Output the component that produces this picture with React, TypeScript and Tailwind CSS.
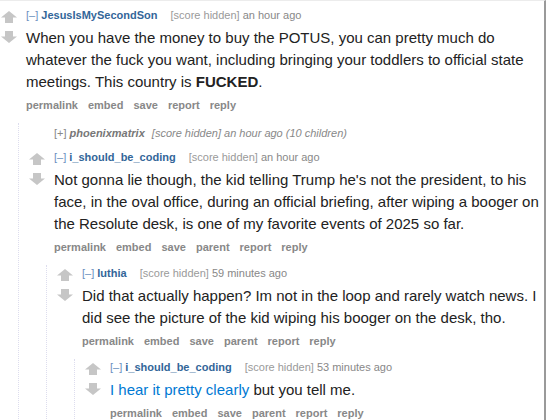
import React from "react";

type Comment = {
  author: string;
  time: string;
  body: React.ReactNode;
  buttons: string[];
  children?: React.ReactNode;
};

function Arrow({ down }: { down?: boolean }) {
  return (
    <svg width="16" height="12" viewBox="0 0 16 12" className={down ? "rotate-180" : ""}>
      <path d="M8 0 L16 6.5 L12 6.5 L12 12 L4 12 L4 6.5 L0 6.5 Z" fill="#c6c6c6" />
    </svg>
  );
}

function Tagline({ author, time }: { author: string; time: string }) {
  return (
    <div className="h-[16px] text-[11px] leading-[16px] whitespace-nowrap">
      <span className="text-[#6a8fc0]">[–]</span>{" "}
      <span className="font-bold text-[#336699] mr-[10px]">{author}</span>{" "}
      <span className="text-[#9a9a9a]">[score hidden]</span>{" "}
      <span className="text-[#888]">{time}</span>
    </div>
  );
}

function Buttons({ items }: { items: string[] }) {
  return (
    <ul className="flex gap-[10px] mt-[4px] h-[16px] text-[11px] leading-[16px] font-bold text-[#888]">
      {items.map((b) => (
        <li key={b}>{b}</li>
      ))}
    </ul>
  );
}

function CommentItem({ author, time, body, buttons, children }: Comment) {
  return (
    <div>
      <div className="flex">
        <div className="w-[25px] shrink-0 flex flex-col gap-[8px] mt-[4px]">
          <Arrow />
          <Arrow down />
        </div>
        <div className="flex-1 pr-[2px]">
          <Tagline author={author} time={time} />
          <div className="mt-[4px] text-[15px] leading-[22px] text-[#222]">{body}</div>
          <Buttons items={buttons} />
        </div>
      </div>
      {children && (
        <div className="ml-[17px] mt-[10px] border-l border-dotted border-[#dde] pl-[10px]">{children}</div>
      )}
    </div>
  );
}

function Collapsed() {
  return (
    <div className="pl-[25px] pt-[2px] mb-[8px] h-[18px] text-[11px] leading-[16px] text-[#888] italic whitespace-nowrap">
      <span className="not-italic">[+]</span>{" "}
      <span className="font-bold text-[#777] mr-[4px]">phoenixmatrix</span>{" "}
      <span>[score hidden] an hour ago (10 children)</span>
    </div>
  );
}

export default function App() {
  return (
    <div className="w-[548px] h-[420px] overflow-hidden bg-white font-['Liberation_Sans',Arial,sans-serif]">
      <div className="w-[546px] h-full border-r-2 border-[#9a9a9a] border-t border-t-[#ececec] pt-[6px] pl-[1px]">
        <CommentItem
          author="JesusIsMySecondSon"
          time="an hour ago"
          body={
            <p>
              When you have the money to buy the POTUS, you can pretty much do whatever the fuck you want,
              including bringing your toddlers to official state meetings. This country is <strong>FUCKED</strong>.
            </p>
          }
          buttons={["permalink", "embed", "save", "report", "reply"]}
        >
          <Collapsed />
          <CommentItem
            author="i_should_be_coding"
            time="an hour ago"
            body={
              <p>
                Not gonna lie though, the kid telling Trump he's not the president, to his face, in the oval
                office, during an official briefing, after wiping a booger on the Resolute desk, is one of my
                favorite events of 2025 so far.
              </p>
            }
            buttons={["permalink", "embed", "save", "parent", "report", "reply"]}
          >
            <CommentItem
              author="luthia"
              time="59 minutes ago"
              body={
                <p>
                  Did that actually happen? Im not in the loop and rarely watch news. I did see the picture of the
                  kid wiping his booger on the desk, tho.
                </p>
              }
              buttons={["permalink", "embed", "save", "parent", "report", "reply"]}
            >
              <CommentItem
                author="i_should_be_coding"
                time="53 minutes ago"
                body={
                  <p>
                    <a className="text-[#0079d3]">I hear it pretty clearly</a> but you tell me.
                  </p>
                }
                buttons={["permalink", "embed", "save", "parent", "report", "reply"]}
              />
            </CommentItem>
          </CommentItem>
        </CommentItem>
      </div>
    </div>
  );
}
